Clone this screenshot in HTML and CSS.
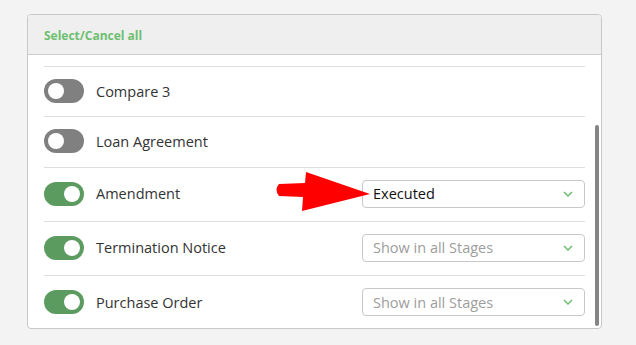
FILE: index.html
```html
<!DOCTYPE html>
<html>
<head>
<meta charset="utf-8">
<link rel="stylesheet" href="styles.css">
</head>
<body>
<div class="card">
  <div class="card-header"><span class="select-all">Select/Cancel all</span></div>
  <div class="card-body">
    <ul class="doc-list">
      <li class="doc-row">
        <span class="toggle"><span class="knob"></span></span>
        <span class="doc-name">Compare 3</span>
      </li>
      <li class="doc-row">
        <span class="toggle"><span class="knob"></span></span>
        <span class="doc-name">Loan Agreement</span>
      </li>
      <li class="doc-row">
        <span class="toggle on"><span class="knob"></span></span>
        <span class="doc-name">Amendment</span>
        <div class="stage-select">
          <span class="stage-value">Executed</span>
          <svg class="chevron" width="10" height="6" viewBox="0 0 10 6"><path d="M1 1 L5 5 L9 1" fill="none" stroke="#6cc070" stroke-width="1.5"/></svg>
        </div>
        <svg class="pointer-arrow" width="100" height="44" viewBox="0 0 100 44">
          <path d="M29 12 L3 13 Q -2 18.5 3 25 L27 26 L26 40 L94 23 L30 1 Z" fill="#ff0000"/>
        </svg>
      </li>
      <li class="doc-row">
        <span class="toggle on"><span class="knob"></span></span>
        <span class="doc-name">Termination Notice</span>
        <div class="stage-select">
          <span class="stage-value placeholder">Show in all Stages</span>
          <svg class="chevron" width="10" height="6" viewBox="0 0 10 6"><path d="M1 1 L5 5 L9 1" fill="none" stroke="#6cc070" stroke-width="1.5"/></svg>
        </div>
      </li>
      <li class="doc-row">
        <span class="toggle on"><span class="knob"></span></span>
        <span class="doc-name">Purchase Order</span>
        <div class="stage-select">
          <span class="stage-value placeholder">Show in all Stages</span>
          <svg class="chevron" width="10" height="6" viewBox="0 0 10 6"><path d="M1 1 L5 5 L9 1" fill="none" stroke="#6cc070" stroke-width="1.5"/></svg>
        </div>
      </li>
    </ul>
    <div class="scroll-thumb"></div>
  </div>
</div>
</body>
</html>
```

FILE: styles.css
```css
* { box-sizing: border-box; }
html, body { margin: 0; padding: 0; }
body {
  background: #f2f3f2;
  font-family: "Open Sans", "Liberation Sans", sans-serif;
  padding: 14px 0 0 27px;
  width: 636px;
  height: 345px;
  overflow: hidden;
}
.card {
  width: 575px;
  height: 315px;
  background: #fff;
  border: 1px solid #c8c8c8;
  border-radius: 4px;
  overflow: hidden;
  display: flex;
  flex-direction: column;
}
.card-header {
  height: 40px;
  background: #efefef;
  border-bottom: 1px solid #cdcdcd;
  padding-left: 16px;
  display: flex;
  align-items: center;
  flex-shrink: 0;
}
.select-all {
  color: #6cc070;
  font-weight: 700;
  font-size: 12px;
  margin-top: 1px;
}
.card-body {
  position: relative;
  flex: 1;
  overflow: hidden;
  padding: 11px 16px 0 16px;
}
.doc-list {
  list-style: none;
  margin: 0;
  padding: 0;
}
.doc-row {
  position: relative;
  display: flex;
  align-items: center;
  border-top: 1px solid #dddddd;
  padding: 12px 0 13.25px 0;
}
.toggle {
  width: 40px;
  height: 24px;
  border-radius: 12px;
  background: #808080;
  position: relative;
  flex-shrink: 0;
}
.toggle.on { background: #5b9b60; }
.knob {
  position: absolute;
  top: 4px;
  left: 4px;
  width: 16px;
  height: 16px;
  border-radius: 50%;
  background: #fff;
}
.toggle.on .knob { left: 20px; }
.doc-name {
  margin-left: 12px;
  font-size: 14.5px;
  color: #333;
}
.stage-select {
  margin-left: auto;
  width: 223px;
  height: 28px;
  border: 1px solid #c8c8c8;
  border-radius: 4px;
  display: flex;
  align-items: center;
  padding: 0 10px 0 10px;
  background: #fff;
}
.stage-value {
  font-size: 14.5px;
  color: #111;
  flex: 1;
}
.stage-value.placeholder { color: #9d9d9d; }
.chevron { flex-shrink: 0; margin-right: 1px; }
.pointer-arrow {
  position: absolute;
  left: 232px;
  top: 3px;
}
.scroll-thumb {
  position: absolute;
  right: 2px;
  top: 70px;
  width: 4px;
  height: 201px;
  border-radius: 2px;
  background: #858585;
}
```
